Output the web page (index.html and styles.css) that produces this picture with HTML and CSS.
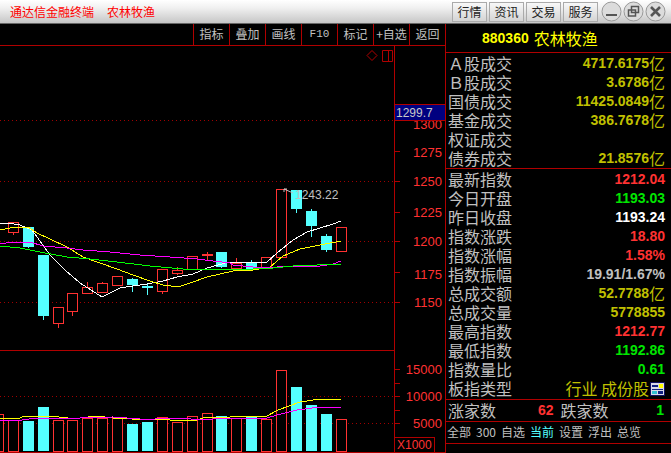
FILE: index.html

```html
<!DOCTYPE html>
<html lang="zh-CN">
<head>
  <meta charset="UTF-8" />
  <title>通达信金融终端</title>
  <link rel="stylesheet" href="styles.css">
</head>
<body>
  <header class="titlebar">
    <div class="app-title"><span>通达信金融终端</span><span>农林牧渔</span></div>
    <div class="menu-buttons">
      <button>行情</button>
      <button>资讯</button>
      <button>交易</button>
      <button>服务</button>
    </div>
    <div class="win-buttons">
      <svg class="win-btn" viewBox="0 0 21 21"><circle cx="10.5" cy="10.5" r="9.5"/><path d="M5 13h11v2H5z" fill="#555"/></svg>
      <svg class="win-btn" viewBox="0 0 21 21"><circle cx="10.5" cy="10.5" r="9.5"/><path d="M8.5 5.5h7v6h-7zM5.5 9h7v6h-7z" fill="none" stroke="#555" stroke-width="1.5"/></svg>
      <svg class="win-btn" viewBox="0 0 21 21"><circle cx="10.5" cy="10.5" r="9.5"/><path d="M6 6l9 9M15 6l-9 9" stroke="#555" stroke-width="2.6"/></svg>
    </div>
  </header>

  <main class="main">
    <section class="chart-area">
      <nav class="toolbar">
        <a>指标</a>
        <a>叠加</a>
        <a>画线</a>
        <a class="f10">F10</a>
        <a>标记</a>
        <a>+自选</a>
        <a>返回</a>
      </nav>

      <svg class="chart" viewBox="0 46 445 407">
        <!-- grid -->
        <g class="dots">
          <path d="M0 120.5H394M0 181.5H394M0 241.5H394M0 302.5H394M0 396.5H394M0 423.5H394"/>
        </g>
        <g class="frame">
          <path d="M0 350.5H394M0 452.5H445M394.5 46V453"/>
          <path d="M394 151.5h6M394 120.5h6M394 181.5h6M394 212.5h6M394 241.5h6M394 272.5h6M394 302.5h6M394 369.5h6M394 383.5h6M394 396.5h6M394 410.5h6M394 423.5h6"/>
          <path d="M434.5 437V452M394 437.5h41"/>
          <path d="M372 50.5l5 5-5 5-5-5z"/>
          <path d="M382.5 50.5h10v11h-10zM388.5 50.5v11"/>
        </g>

        <!-- candles, red ones hollow -->
        <g class="up">
          <path d="M4.5 229H0"/>
          <path d="M13.5 232v3M58.5 323v5M72.5 311v5M87.5 287v-5M102.5 283v-1M117.5 285v1M162.5 291v3M177.5 267v8M207.5 252v8M236.5 263v-5"/>
          <rect x="8.5" y="222.5" width="10" height="10"/>
          <rect x="53.5" y="307.5" width="10" height="16"/>
          <rect x="67.5" y="293.5" width="10" height="18"/>
          <rect x="82.5" y="287.5" width="10" height="6"/>
          <rect x="97.5" y="283.5" width="10" height="9"/>
          <rect x="112.5" y="276.5" width="10" height="9"/>
          <rect x="157.5" y="269.5" width="10" height="22"/>
          <rect x="172.5" y="270.5" width="10" height="3"/>
          <rect x="187.5" y="256.5" width="10" height="13"/>
          <rect x="202.5" y="254" width="10" height="1"/>
          <rect x="231.5" y="263.5" width="10" height="5"/>
          <rect x="261.5" y="257.5" width="10" height="11"/>
          <rect x="276.5" y="189.5" width="10" height="68"/>
          <rect x="336.5" y="227.5" width="10" height="24"/>
        </g>
        <g class="down">
          <path d="M28.5 227v21M43.5 316v4M132.5 278v14M147.5 284v11M221.5 264v4M251.5 260v3M296.5 209v4M311.5 209v28M326.5 234v18"/>
          <rect x="23" y="227" width="11" height="20"/>
          <rect x="38" y="255" width="11" height="61"/>
          <rect x="127" y="279" width="11" height="6"/>
          <rect x="142" y="286" width="11" height="2"/>
          <rect x="216" y="252" width="11" height="15"/>
          <rect x="246" y="263" width="11" height="6"/>
          <rect x="291" y="190" width="11" height="19"/>
          <rect x="306" y="211" width="11" height="15"/>
          <rect x="321" y="236" width="11" height="14"/>
        </g>

        <!-- moving averages -->
        <polyline class="ma-white" points="0,223 8,223 20,225 32,230 50,255 65,270 80,283 102,297 120,288 133,286 147,284 163,281 177,277 193,274 207,268 229,262 267,262 277,253 293,240 307,232 320,228 333,224 341,221"/>
        <polyline class="ma-yellow" points="0,230 10,228 28,227 37,233 50,239 67,247 83,257 100,263 117,269 133,275 150,281 163,285 178,287 190,283 207,277 233,271 253,270 270,267 283,256 300,249 320,245 341,241"/>
        <polyline class="ma-magenta" points="0,244 13,242 30,242 43,246 67,248 83,250 110,252 140,255 170,257 197,259 213,261 230,263 233,265 253,267 263,268 277,267 293,266 320,266 333,264 341,261"/>
        <polyline class="ma-green" points="0,246 20,248 40,252 67,257 90,259 117,262 150,266 183,269 230,269 253,269 273,268 293,266 341,264"/>

        <!-- high marker -->
        <path class="marker" d="M284 189l9 4M284 189h3M284 189v3"/>
        <text class="peak" x="295" y="199">1243.22</text>

        <!-- volume -->
        <g class="up">
          <rect x="-6.5" y="414.5" width="10" height="36.5"/>
          <rect x="8.5" y="420.5" width="10" height="30.5"/>
          <rect x="53.5" y="420.5" width="10" height="30.5"/>
          <rect x="67.5" y="420.5" width="10" height="30.5"/>
          <rect x="82.5" y="418.5" width="10" height="32.5"/>
          <rect x="97.5" y="418.5" width="10" height="32.5"/>
          <rect x="112.5" y="417.5" width="10" height="33.5"/>
          <rect x="157.5" y="417.5" width="10" height="33.5"/>
          <rect x="172.5" y="422.5" width="10" height="28.5"/>
          <rect x="187.5" y="416.5" width="10" height="34.5"/>
          <rect x="202.5" y="413.5" width="10" height="37.5"/>
          <rect x="231.5" y="418.5" width="10" height="32.5"/>
          <rect x="261.5" y="419.5" width="10" height="31.5"/>
          <rect x="276.5" y="370.5" width="10" height="80.5"/>
          <rect x="336.5" y="419.5" width="10" height="31.5"/>
        </g>
        <g class="down">
          <rect x="23" y="421" width="11" height="30"/>
          <rect x="38" y="407" width="11" height="44"/>
          <rect x="127" y="424" width="11" height="27"/>
          <rect x="142" y="422" width="11" height="29"/>
          <rect x="216" y="416" width="11" height="35"/>
          <rect x="246" y="416" width="11" height="35"/>
          <rect x="291" y="387" width="11" height="64"/>
          <rect x="306" y="405" width="11" height="46"/>
          <rect x="321" y="414" width="11" height="37"/>
        </g>
        <polyline class="ma-yellow" points="0,419 20,418 22,417 33,416 50,416 68,418 80,418 97,416 113,418 123,418 140,420 155,419 170,420 197,420 203,418 230,417 267,416 278,410 300,402 320,399 341,399"/>
        <polyline class="ma-magenta" points="0,421 7,420 22,420 37,418 80,418 113,417 140,419 155,419 185,418 197,420 213,419 230,418 267,418 277,415 297,410 320,407 341,408"/>

        <!-- axis labels -->
        <g class="axis">
          <text x="442" y="129">1300</text>
          <text x="442" y="157">1275</text>
          <text x="442" y="186">1250</text>
          <text x="442" y="217">1225</text>
          <text x="442" y="246">1200</text>
          <text x="442" y="279">1175</text>
          <text x="442" y="307">1150</text>
          <text x="442" y="374">15000</text>
          <text x="442" y="401">10000</text>
          <text x="442" y="428">5000</text>
        </g>
        <text class="unit" x="397" y="449">X1000</text>

        <rect class="price-box" x="394.5" y="104.5" width="51" height="16"/>
        <text class="price-text" x="396" y="117">1299.7</text>
      </svg>
    </section>

    <aside class="side-panel">
      <div class="code-head"><b>880360</b><span>农林牧渔</span></div>

      <div class="stats stats-top">
        <div class="row"><span>Ａ股成交</span><span class="val amt">4717.6175<i>亿</i></span></div>
        <div class="row"><span>Ｂ股成交</span><span class="val amt">3.6786<i>亿</i></span></div>
        <div class="row"><span>国债成交</span><span class="val amt">11425.0849<i>亿</i></span></div>
        <div class="row"><span>基金成交</span><span class="val amt">386.7678<i>亿</i></span></div>
        <div class="row"><span>权证成交</span></div>
        <div class="row"><span>债券成交</span><span class="val amt">21.8576<i>亿</i></span></div>
      </div>

      <div class="stats stats-main">
        <div class="row"><span>最新指数</span><span class="val red">1212.04</span></div>
        <div class="row"><span>今日开盘</span><span class="val green">1193.03</span></div>
        <div class="row"><span>昨日收盘</span><span class="val white">1193.24</span></div>
        <div class="row"><span>指数涨跌</span><span class="val red">18.80</span></div>
        <div class="row"><span>指数涨幅</span><span class="val red">1.58%</span></div>
        <div class="row"><span>指数振幅</span><span class="val grey">19.91/1.67%</span></div>
        <div class="row"><span>总成交额</span><span class="val amt">52.7788<i>亿</i></span></div>
        <div class="row"><span>总成交量</span><span class="val amt">5778855</span></div>
        <div class="row"><span>最高指数</span><span class="val red">1212.77</span></div>
        <div class="row"><span>最低指数</span><span class="val green">1192.86</span></div>
        <div class="row"><span>指数量比</span><span class="val green">0.61</span></div>
        <div class="row">
          <span>板指类型</span>
          <span class="board-type">行业 成份股
            <svg class="board-icon" viewBox="0 0 15 14">
              <rect x=".5" y=".5" width="14" height="13" fill="#d8d8e8" stroke="#101060"/>
              <path d="M9 2h4v4H9z" fill="#ff0"/>
              <path d="M2 3h6v2H2zM2 7h11v1H2z" fill="#102080"/>
              <path d="M2 9h5v3H2z" fill="#30c0d0"/>
              <path d="M8 9h5v3H8z" fill="#102080"/>
            </svg>
          </span>
        </div>
      </div>

      <div class="breadth">
        <span>涨家数</span><b class="red">62</b>
        <span class="fall-label">跌家数</span><b class="green fall-num">1</b>
      </div>

      <nav class="tabs">
        <a>全部</a><a>300</a><a>自选</a><a class="current">当前</a><a>设置</a><a>浮出</a><a>总览</a>
      </nav>
    </aside>
  </main>
</body>
</html>
```

FILE: styles.css

```css
html, body {
  margin: 0;
  height: 100%;
  overflow: hidden;
  background: #000;
  font-family: "Noto Sans CJK SC", "Liberation Sans", sans-serif;
  color: #c0c0c0;
}

.titlebar {
  height: 23px;
  border-bottom: 1px solid #666;
  background: linear-gradient(to bottom, #fff, #f0f0f0 35%, #c6c6c6);
  display: flex;
  align-items: center;
}

.app-title {
  margin-left: 10px;
  font-size: 12px;
  color: #f00;
  display: flex;
  gap: 13px;
  flex: 1;
}

.menu-buttons {
  display: flex;
  gap: 2px;
  margin-right: 3px;
}

.menu-buttons button {
  width: 35px;
  height: 20px;
  padding: 0;
  border: 1px solid #aaa;
  background: linear-gradient(to bottom, #f8f8f8, #d4d4d4);
  font-family: inherit;
  font-size: 12px;
  line-height: 16px;
  color: #222;
}

.win-buttons {
  display: flex;
  margin-right: 4px;
}

.win-btn {
  width: 21px;
  height: 21px;
  margin-right: 1px;
}

.win-btn circle {
  fill: #dcdcdc;
  stroke: #999;
}

.main {
  display: flex;
  height: 429px;
}

.chart-area {
  width: 445px;
  display: flex;
  flex-direction: column;
}

.toolbar {
  height: 21px;
  border-bottom: 1px solid #b00000;
  display: flex;
  justify-content: flex-end;
}

.toolbar a {
  width: 35px;
  border-left: 1px solid #b00000;
  font-size: 12px;
  line-height: 20px;
  text-align: center;
}

.toolbar .f10 {
  font-family: "Liberation Mono", monospace;
  font-size: 11px;
}

.chart {
  display: block;
  width: 445px;
  height: 407px;
}

.dots path {
  stroke: #a00000;
  stroke-dasharray: 1 3;
  fill: none;
}

.frame path {
  stroke: #b00000;
  fill: none;
}

.up rect, .up path {
  fill: #000;
  stroke: #ff3232;
  shape-rendering: crispEdges;
}

.down rect {
  fill: #54ffff;
  shape-rendering: crispEdges;
}

.down path {
  stroke: #54ffff;
  shape-rendering: crispEdges;
}

polyline {
  fill: none;
  stroke-width: 1;
  shape-rendering: crispEdges;
}

.ma-white { stroke: #fff; }
.ma-yellow { stroke: #ff0; }
.ma-magenta { stroke: #f0f; }
.ma-green { stroke: #0f0; }

.marker {
  stroke: #c0c0c0;
  fill: none;
}

.peak {
  font-family: "Liberation Sans", sans-serif;
  font-size: 12px;
  fill: #c0c0c0;
}

.axis text {
  font-family: "Liberation Sans", sans-serif;
  font-size: 13px;
  fill: #ff3232;
  text-anchor: end;
}

.unit {
  font-family: "Liberation Sans", sans-serif;
  font-size: 12px;
  fill: #ff3232;
}

.price-box {
  fill: #000080;
  stroke: #b00000;
}

.price-text {
  font-family: "Liberation Sans", sans-serif;
  font-size: 12px;
  fill: #c8c8c8;
}

.side-panel {
  width: 225px;
  border-left: 1px solid #b00000;
  display: flex;
  flex-direction: column;
}

.code-head {
  height: 28px;
  border-bottom: 1px solid #b00000;
  padding-left: 36px;
  display: flex;
  align-items: center;
  gap: 5px;
  color: #ff0;
}

.code-head b {
  font-family: "Liberation Sans", sans-serif;
  font-size: 14px;
}

.code-head span {
  font-size: 16px;
}

.stats {
  border-bottom: 1px solid #b00000;
  padding-right: 6px;
}

.stats-top {
  padding-top: 1px;
}

.stats-main {
  padding: 1px 6px 1px 0;
  height: 228px;
}

.row {
  height: 19px;
  line-height: 19px;
  padding-left: 2px;
  font-size: 16px;
  display: flex;
  justify-content: space-between;
  align-items: center;
}

.val {
  font-family: "Liberation Sans", sans-serif;
  font-size: 14px;
  font-weight: bold;
  display: flex;
  align-items: center;
}

.val i {
  font-family: "Noto Sans CJK SC", sans-serif;
  font-style: normal;
  font-weight: normal;
  font-size: 16px;
}

.amt { color: #c0c000; }
.red { color: #ff3232; }
.green { color: #00e600; }
.white { color: #fff; }
.grey { color: #c0c0c0; }

.board-type {
  color: #c0c000;
  display: flex;
  align-items: center;
  gap: 1px;
}

.board-icon {
  width: 15px;
  height: 14px;
}

.breadth {
  height: 21px;
  border-bottom: 1px solid #b00000;
  padding: 0 7px 0 2px;
  font-size: 16px;
  line-height: 21px;
  display: flex;
}

.breadth b {
  font-family: "Liberation Sans", sans-serif;
  font-size: 14px;
}

.breadth .red {
  margin-left: 42px;
}

.fall-label {
  margin-left: 7px;
}

.fall-num {
  margin-left: auto;
}

.tabs {
  height: 21px;
  border-bottom: 1px solid #b00000;
  padding-left: 1px;
  display: flex;
  gap: 5px;
  font-size: 12px;
  line-height: 20px;
}

.tabs .current {
  color: #54ffff;
}
```
